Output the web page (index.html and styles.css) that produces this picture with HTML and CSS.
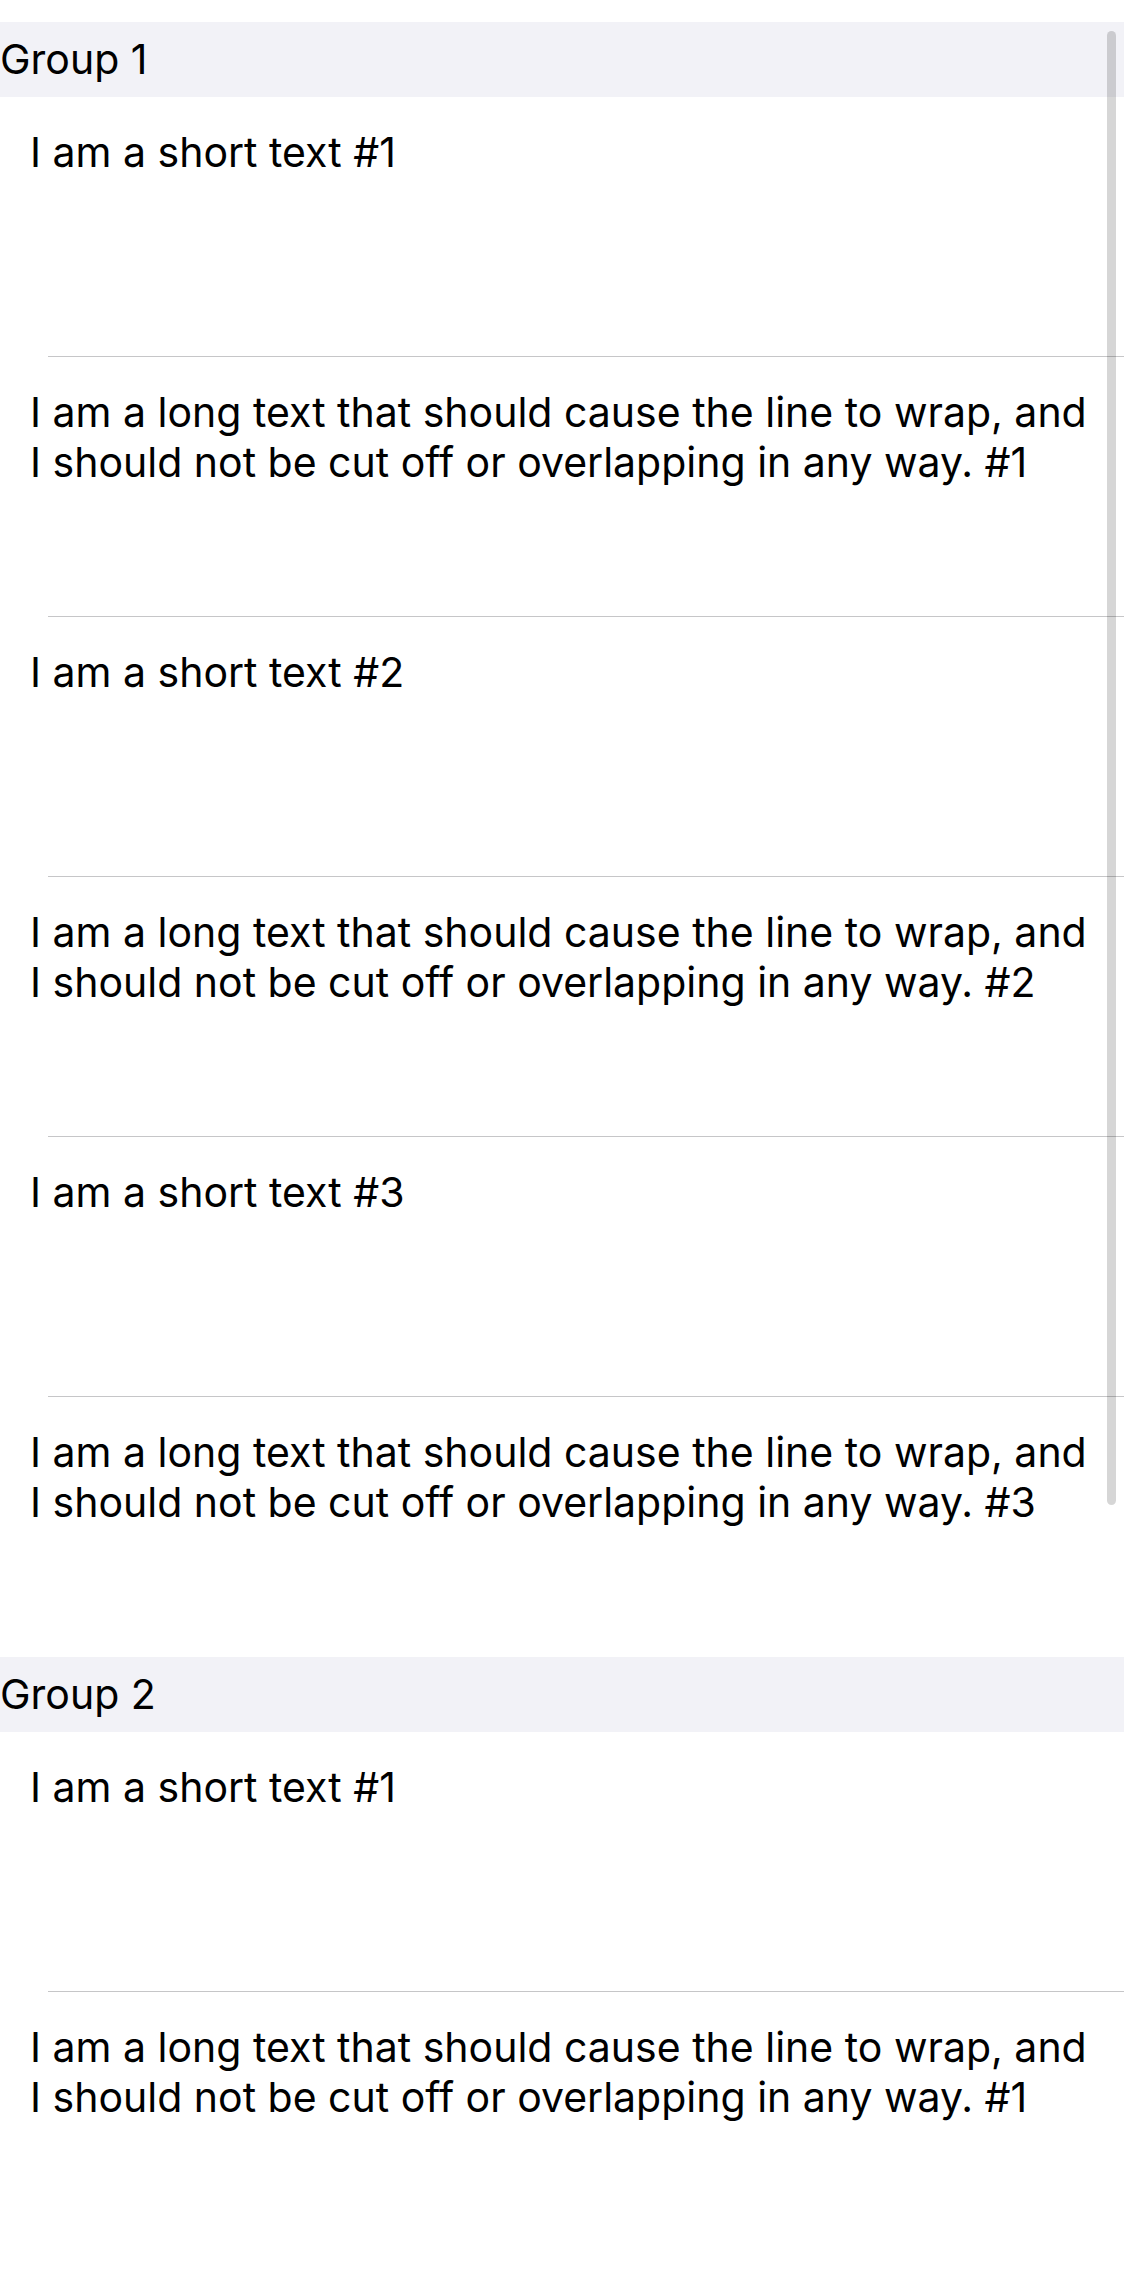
FILE: index.html
```html
<!DOCTYPE html>
<html lang="en">
<head>
<meta charset="utf-8">
<title>Groups</title>
<link rel="stylesheet" href="styles.css">
</head>
<body>
<div class="screen">
  <section class="group">
    <h2 class="group-header">Group 1</h2>
    <ul class="rows">
      <li class="row">I am a short text #1</li>
      <li class="row">I am a long text that should cause the line to wrap, and I should not be cut off or overlapping in any way. #1</li>
      <li class="row">I am a short text #2</li>
      <li class="row">I am a long text that should cause the line to wrap, and I should not be cut off or overlapping in any way. #2</li>
      <li class="row">I am a short text #3</li>
      <li class="row">I am a long text that should cause the line to wrap, and I should not be cut off or overlapping in any way. #3</li>
    </ul>
  </section>
  <section class="group">
    <h2 class="group-header">Group 2</h2>
    <ul class="rows">
      <li class="row">I am a short text #1</li>
      <li class="row">I am a long text that should cause the line to wrap, and I should not be cut off or overlapping in any way. #1</li>
    </ul>
  </section>
  <div class="scroll-indicator"></div>
</div>
</body>
</html>
```
FILE: styles.css
```css
html, body {
  margin: 0;
  padding: 0;
  background: #ffffff;
}

body {
  font-family: "Inter", "Liberation Sans", sans-serif;
  font-size: 41px;
  color: #000000;
  overflow: hidden;
}

.screen {
  position: relative;
  padding-top: 22px;
  height: 2264px;
  overflow: hidden;
}

.group {
  display: flex;
  flex-direction: column;
}

.group-header {
  margin: 0;
  height: 75px;
  box-sizing: border-box;
  padding: 12px 0 13px 0;
  background: #f2f2f7;
  font-size: 41px;
  font-weight: 400;
  line-height: 50px;
}

.rows {
  list-style: none;
  margin: 0;
  padding: 0;
}

.row {
  position: relative;
  height: 260px;
  box-sizing: border-box;
  padding: 30px 30px 0 30px;
  line-height: 50px;
}

.row::after {
  content: "";
  position: absolute;
  left: 48px;
  right: 0;
  bottom: 0;
  height: 1px;
  background: #c6c6c8;
}

.row:last-child::after {
  display: none;
}

.scroll-indicator {
  position: absolute;
  top: 31px;
  left: 1107px;
  width: 9px;
  height: 1474px;
  border-radius: 5px;
  background: rgba(0, 0, 0, 0.16);
}
```
